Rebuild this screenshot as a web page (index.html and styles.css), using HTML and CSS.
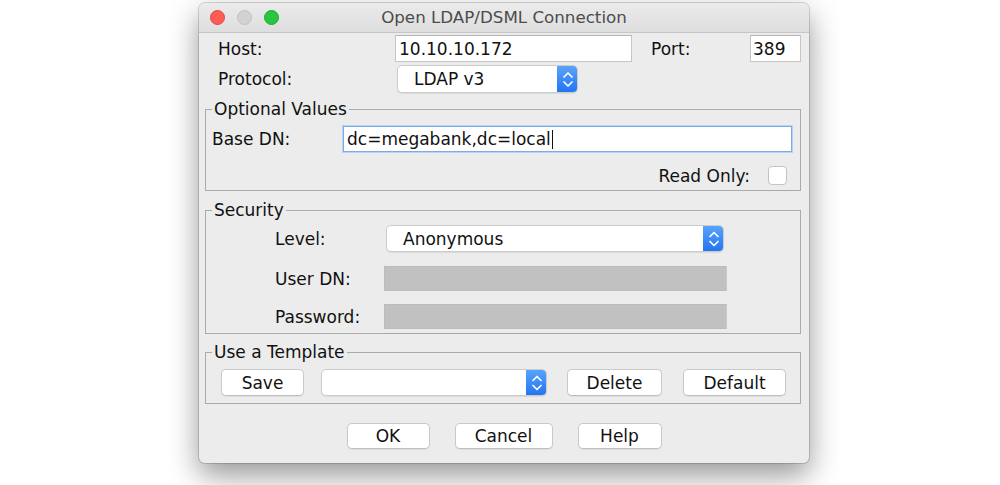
FILE: index.html
```html
<!DOCTYPE html>
<html>
<head>
<meta charset="utf-8">
<link rel="stylesheet" href="styles.css">
</head>
<body>
<div class="stage">
  <div class="window">
    <div class="titlebar">
      <div class="lights">
        <span class="light red"></span>
        <span class="light gray"></span>
        <span class="light green"></span>
      </div>
      <div class="title">Open LDAP/DSML Connection</div>
      <div></div>
    </div>
    <div class="content">
      <div class="top">
        <div class="row row-host">
          <span class="label lbl-top">Host:</span>
          <div class="field host-field">10.10.10.172</div>
          <span class="label lbl-port">Port:</span>
          <div class="field port-field">389</div>
        </div>
        <div class="row row-protocol">
          <span class="label lbl-top">Protocol:</span>
          <div class="combo protocol-combo">
            <span class="combo-text">LDAP v3</span>
            <span class="stepper"><svg width="21" height="28" viewBox="0 0 21 28"><path d="M7 12 L11 8 L15 12 M7 17 L11 21 L15 17" fill="none" stroke="#fff" stroke-width="1.7" stroke-linecap="round" stroke-linejoin="round"/></svg></span>
          </div>
        </div>
      </div>

      <fieldset class="group group-optional">
        <legend>Optional Values</legend>
        <div class="row row-basedn">
          <span class="label lbl-basedn">Base DN:</span>
          <div class="field focus-field">dc=megabank,dc=local<span class="caret"></span></div>
        </div>
        <div class="row row-readonly">
          <span class="label">Read Only:</span>
          <span class="checkbox"></span>
        </div>
      </fieldset>

      <fieldset class="group group-security">
        <legend>Security</legend>
        <div class="row row-level">
          <span class="label lbl-sec">Level:</span>
          <div class="combo level-combo">
            <span class="combo-text">Anonymous</span>
            <span class="stepper"><svg width="21" height="27" viewBox="0 0 21 27"><path d="M7 11.5 L11 7.5 L15 11.5 M7 16.5 L11 20.5 L15 16.5" fill="none" stroke="#fff" stroke-width="1.7" stroke-linecap="round" stroke-linejoin="round"/></svg></span>
          </div>
        </div>
        <div class="row row-userdn">
          <span class="label lbl-sec2">User DN:</span>
          <div class="field disabled-field"></div>
        </div>
        <div class="row row-password">
          <span class="label lbl-sec2">Password:</span>
          <div class="field disabled-field"></div>
        </div>
      </fieldset>

      <fieldset class="group group-template">
        <legend>Use a Template</legend>
        <div class="row row-template">
          <button class="btn btn-save">Save</button>
          <div class="combo template-combo">
            <span class="combo-text"></span>
            <span class="stepper"><svg width="21" height="27" viewBox="0 0 21 27"><path d="M7 11.5 L11 7.5 L15 11.5 M7 16.5 L11 20.5 L15 16.5" fill="none" stroke="#fff" stroke-width="1.7" stroke-linecap="round" stroke-linejoin="round"/></svg></span>
          </div>
          <button class="btn btn-delete">Delete</button>
          <button class="btn btn-default">Default</button>
        </div>
      </fieldset>

      <div class="actions">
        <button class="btn btn-ok">OK</button>
        <button class="btn btn-cancel">Cancel</button>
        <button class="btn btn-help">Help</button>
      </div>
    </div>
  </div>
</div>
</body>
</html>
```

FILE: styles.css
```css
* { box-sizing: border-box; }

html, body {
  margin: 0;
  background: #ffffff;
}

body {
  font-family: "DejaVu Sans", "Liberation Sans", sans-serif;
  font-size: 17px;
  color: #111;
}

.stage {
  padding: 3px 0 22px 199px;
}

.window {
  width: 610px;
  height: 460px;
  background: #ececec;
  border-radius: 6px;
  box-shadow: 0 0 0 1px rgba(0, 0, 0, 0.15), 0 12px 30px rgba(0, 0, 0, 0.42);
  overflow: hidden;
  display: flex;
  flex-direction: column;
}

/* Title bar */
.titlebar {
  height: 30px;
  flex: none;
  display: grid;
  grid-template-columns: 1fr auto 1fr;
  align-items: center;
  background: linear-gradient(#ebebeb, #dedede);
  border-bottom: 1px solid #c6c6c6;
}

.lights {
  display: flex;
  gap: 12px;
  padding-left: 11px;
  padding-bottom: 1px;
}

.light {
  width: 15px;
  height: 15px;
  border-radius: 50%;
  display: block;
}

.red { background: #fd5d55; border: 1px solid #e2463f; }
.gray { background: #d2d2d2; border: 1px solid #c1c1c1; }
.green { background: #29c73f; border: 1px solid #1eac2c; }

.title {
  color: #4c4c4c;
  font-size: 16.7px;
  padding-bottom: 1px;
}

/* Content */
.content {
  display: flex;
  flex-direction: column;
}

.row {
  display: flex;
  align-items: center;
}

.label {
  white-space: nowrap;
}

.top {
  padding: 2px 0 0 19px;
}

.row-host { height: 27px; }
.row-protocol { height: 28px; margin-top: 3px; }

.lbl-top { width: 177px; }
.lbl-port { width: 99px; margin-left: 19px; }

.field {
  height: 100%;
  background: #fff;
  border: 1px solid #c6c6c6;
  border-top-color: #b4b4b4;
  padding: 0 3px;
  display: flex;
  align-items: center;
  white-space: nowrap;
}

.host-field { width: 237px; }
.port-field { width: 51px; padding-left: 2px; }

/* Combo boxes */
.combo {
  height: 100%;
  display: flex;
  background: #fff;
  border: 1px solid #cbcbcb;
  border-radius: 5px;
  box-shadow: 0 1px 1px rgba(0, 0, 0, 0.08);
  overflow: hidden;
}

.combo-text {
  flex: 1;
  display: flex;
  align-items: center;
  padding-left: 16px;
}

.stepper {
  width: 21px;
  flex: none;
  display: flex;
  align-items: center;
  justify-content: center;
  background: linear-gradient(#5aa5fb, #2273f3);
  margin: -1px -1px -1px 0;
}

.protocol-combo { width: 181px; margin-left: 2px; }

/* Groups */
.group {
  margin: 0 8px 0 6px;
  padding: 0;
  border: 1px solid #aaaaaa;
  min-inline-size: 0;
}

.group legend {
  margin-left: 6px;
  padding: 0 2px;
  line-height: 20px;
  font-size: 17px;
}

.group-optional { margin-top: 6px; padding-bottom: 5px; }

.row-basedn {
  height: 26px;
  margin-top: 7px;
  padding-left: 6px;
}

.lbl-basedn { width: 131px; }

.focus-field {
  width: 449px;
  border: 1px solid #7eabe5;
  box-shadow: 0 0 0 1px #b9d2f2;
}

.caret {
  display: inline-block;
  width: 1px;
  height: 19px;
  background: #111;
  margin-left: 1px;
}

.row-readonly {
  height: 19px;
  margin-top: 14px;
  justify-content: flex-end;
  padding-right: 13px;
  gap: 18px;
}

.checkbox {
  width: 19px;
  height: 19px;
  background: #fff;
  border: 1px solid #c3c3c3;
  border-radius: 4px;
  display: block;
}

.group-security { margin-top: 9px; padding-bottom: 4px; }

.row-level {
  height: 27px;
  margin-top: 5px;
  padding-left: 69px;
}

.lbl-sec { width: 111px; }
.lbl-sec2 { width: 109px; }

.level-combo { width: 338px; }

.row-userdn {
  height: 25px;
  margin-top: 14px;
  padding-left: 69px;
}

.row-password {
  height: 25px;
  margin-top: 13px;
  padding-left: 69px;
}

.disabled-field {
  width: 343px;
  background: #c1c1c1;
  border: 1px solid #bcbcbc;
  border-right-color: #c9c9c9;
}

.group-template { margin-top: 8px; padding-bottom: 7px; }

.row-template {
  height: 27px;
  margin-top: 7px;
  padding-left: 15px;
}

/* Buttons */
.btn {
  font-family: inherit;
  font-size: 17px;
  color: #111;
  height: 100%;
  background: #fff;
  border: 1px solid #c9c9c9;
  border-bottom-color: #bdbdbd;
  border-radius: 5px;
  box-shadow: 0 1px 1px rgba(0, 0, 0, 0.06);
  padding: 0;
  display: flex;
  align-items: center;
  justify-content: center;
}

.btn-save { width: 83px; }
.template-combo { width: 226px; margin-left: 17px; }
.btn-delete { width: 95px; margin-left: 20px; }
.btn-default { width: 103px; margin-left: 21px; }

.actions {
  height: 26px;
  margin-top: 19px;
  display: flex;
  justify-content: center;
  gap: 25px;
}

.btn-ok { width: 83px; }
.btn-cancel { width: 98px; }
.btn-help { width: 84px; }
```
